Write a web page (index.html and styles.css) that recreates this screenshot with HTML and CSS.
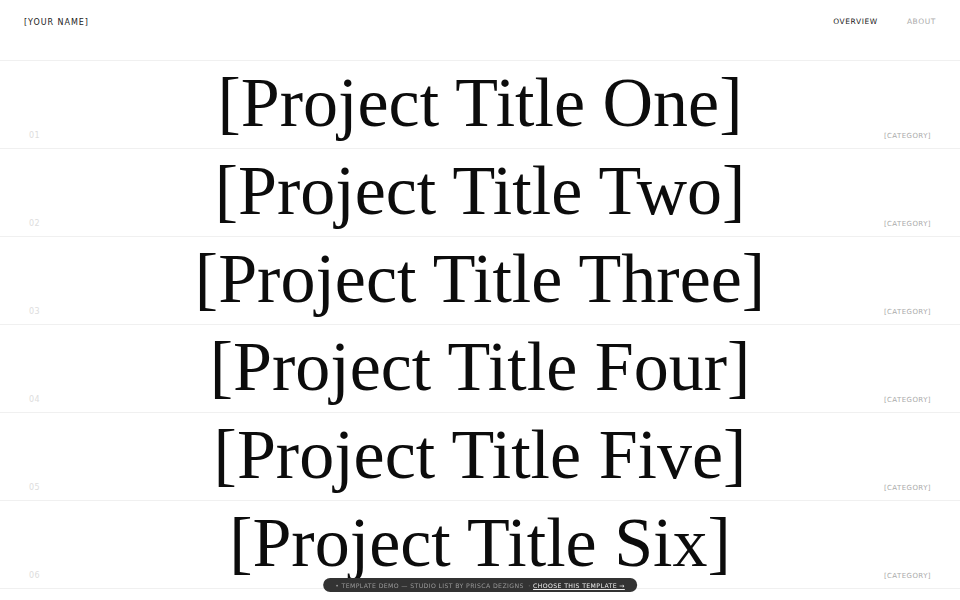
FILE: index.html
```html
<!DOCTYPE html>
<html>
<head>
<meta charset="utf-8">
<link rel="stylesheet" href="styles.css">
</head>
<body>
<header class="site-header">
  <div class="brand">[YOUR NAME]</div>
  <nav class="nav">
    <a class="nav-link active">OVERVIEW</a>
    <a class="nav-link">ABOUT</a>
  </nav>
</header>
<main class="list">
  <div class="row"><span class="num">01</span><h2 class="title">[Project Title One]</h2><span class="cat">[CATEGORY]</span></div>
  <div class="row"><span class="num">02</span><h2 class="title">[Project Title Two]</h2><span class="cat">[CATEGORY]</span></div>
  <div class="row"><span class="num">03</span><h2 class="title">[Project Title Three]</h2><span class="cat">[CATEGORY]</span></div>
  <div class="row"><span class="num">04</span><h2 class="title">[Project Title Four]</h2><span class="cat">[CATEGORY]</span></div>
  <div class="row"><span class="num">05</span><h2 class="title">[Project Title Five]</h2><span class="cat">[CATEGORY]</span></div>
  <div class="row"><span class="num">06</span><h2 class="title">[Project Title Six]</h2><span class="cat">[CATEGORY]</span></div>
</main>
<div class="pill">
  <span class="pill-text">• TEMPLATE DEMO — STUDIO LIST BY PRISCA DEZIGNS &nbsp;·&nbsp;</span>
  <a class="pill-link">CHOOSE THIS TEMPLATE →</a>
</div>
</body>
</html>
```
FILE: styles.css
```css
html, body {
  margin: 0;
  padding: 0;
  background: #fff;
  overflow: hidden;
}
body {
  font-family: "DejaVu Sans", sans-serif;
  color: #111;
}
.site-header {
  height: 61px;
  box-sizing: border-box;
  padding: 17px 24px 0 24px;
  display: flex;
  justify-content: space-between;
  align-items: flex-start;
  border-bottom: 1px solid #f0f0f0;
}
.brand {
  font-size: 8px;
  letter-spacing: 0.12em;
  color: #222;
  line-height: 10px;
  margin-top: 1px;
}
.nav {
  display: flex;
  gap: 29px;
}
.nav-link {
  font-size: 7.5px;
  letter-spacing: 0.08em;
  line-height: 10px;
  color: #aaa;
}
.nav-link.active {
  color: #222;
}
.list {
  display: flex;
  flex-direction: column;
}
.row {
  height: 88px;
  box-sizing: border-box;
  border-bottom: 1px solid #f0f0f0;
  display: grid;
  grid-template-columns: 1fr auto 1fr;
  align-items: end;
}
.num {
  font-size: 8px;
  color: #ddd;
  padding-left: 29px;
  padding-bottom: 8px;
  letter-spacing: 0.05em;
}
.cat {
  font-size: 7px;
  color: #aaa;
  letter-spacing: 0.06em;
  justify-self: end;
  padding-right: 29px;
  padding-bottom: 8px;
}
.title {
  margin: 0;
  font-family: "Liberation Serif", serif;
  font-weight: 400;
  font-size: 70px;
  line-height: 70px;
  color: #0c0c0c;
  white-space: nowrap;
  padding-bottom: 10px;
}
.pill {
  position: fixed;
  left: 50%;
  bottom: 8px;
  transform: translateX(-50%);
  background: #333;
  border-radius: 8px;
  height: 14px;
  padding: 0 12px;
  display: flex;
  align-items: center;
  white-space: nowrap;
  font-size: 6.2px;
  letter-spacing: 0.06em;
}
.pill-text {
  color: #999;
}
.pill-link {
  color: #eee;
  text-decoration: underline;
  text-underline-offset: 1px;
}
```
